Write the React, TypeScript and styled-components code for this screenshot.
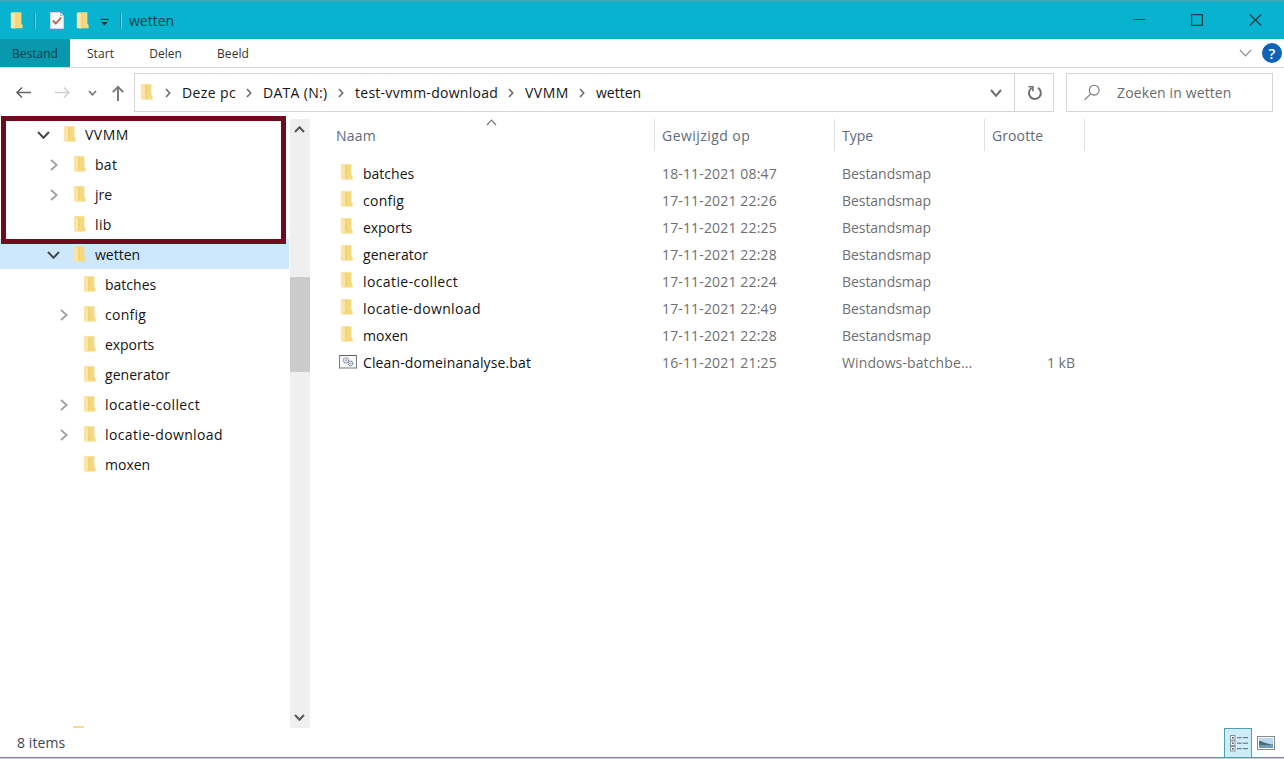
import React from "react";
import styled, { createGlobalStyle } from "styled-components";

const Global = createGlobalStyle`
  * { box-sizing: border-box; }
  html, body { margin: 0; padding: 0; background: #fff; overflow: hidden; }
  body { font-family: "Open Sans", "Noto Sans", sans-serif; font-size: 14px; color: #141414; }
`;

const Window = styled.div`
  display: flex;
  flex-direction: column;
  width: 1284px;
  height: 759px;
  background: #fff;
  border-bottom: 1px solid #b5d5da;
  white-space: nowrap;
`;

const Text = styled.span<{ $ls?: number }>`
  letter-spacing: ${(p) => p.$ls ?? 0}px;
`;

const TitleBar = styled.header`
  display: flex;
  align-items: center;
  height: 39px;
  flex: none;
  background: #07b3cf;
  border-top: 2px solid #3aa9bb;
  padding: 0 22px 0 10px;
  color: #15404d;
`;

const QuickTools = styled.div`
  display: flex;
  align-items: center;
  flex: 1;
`;

const ToolSlot = styled.span<{ $w: number }>`
  display: flex;
  align-items: center;
  width: ${(p) => p.$w}px;
`;

const Divider = styled.span<{ $gap: number }>`
  width: 2px;
  height: 16px;
  border-left: 1px solid #1594aa;
  background: #62d0e0;
  margin-right: ${(p) => p.$gap}px;
`;

const WindowButtons = styled.div`
  display: flex;
  align-items: center;
  gap: 46px;
  padding-bottom: 1px;
`;

const Ribbon = styled.nav`
  display: flex;
  height: 29px;
  flex: none;
  border-bottom: 1px solid #d6d6d9;
  font-size: 12px;
  color: #333;
`;

const FileTab = styled.div`
  display: flex;
  align-items: center;
  justify-content: center;
  width: 70px;
  background: #0899ae;
  color: #123c47;
`;

const RibbonTab = styled.div<{ $w: number }>`
  display: flex;
  align-items: center;
  justify-content: center;
  width: ${(p) => p.$w}px;
`;

const RibbonEnd = styled.div`
  display: flex;
  align-items: center;
  gap: 10px;
  margin-left: auto;
  padding-right: 2px;
`;

const Help = styled.span`
  display: flex;
  align-items: center;
  justify-content: center;
  width: 20px;
  height: 20px;
  border-radius: 50%;
  background: #0d63b5;
  color: #fff;
  font-size: 15px;
  font-weight: 600;
`;

const NavBar = styled.div`
  display: flex;
  height: 50px;
  flex: none;
  padding: 5px 11px 6px 0;
`;

const NavArrows = styled.div`
  display: flex;
  align-items: center;
  width: 134px;
  padding-left: 15px;
`;

const AddressBox = styled.div`
  display: flex;
  width: 920px;
  border: 1px solid #d5d5d8;
`;

const Crumbs = styled.div`
  display: flex;
  align-items: center;
  flex: 1;
  padding-left: 5px;
`;

const AddressIcon = styled.span`
  display: flex;
  width: 25px;
  padding-bottom: 2px;
`;

const Crumb = styled.div<{ $w: number }>`
  display: flex;
  align-items: center;
  width: ${(p) => p.$w}px;
`;

const CrumbArrow = styled.span`
  display: flex;
  width: 17px;
`;

const Drop = styled.span`
  display: flex;
  align-items: center;
  width: 24px;
`;

const Refresh = styled.span`
  display: flex;
  align-items: center;
  justify-content: center;
  width: 39px;
  padding-left: 2px;
  border-left: 1px solid #d5d5d8;
`;

const Search = styled.div`
  display: flex;
  align-items: center;
  gap: 16px;
  width: 207px;
  margin-left: 12px;
  padding-left: 17px;
  border: 1px solid #d5d5d8;
  color: #6b6b6c;
`;

const Body = styled.main`
  display: flex;
  height: 610px;
  flex: none;
`;

const Sidebar = styled.aside`
  position: relative;
  width: 290px;
  padding: 1px 1px 0 0;
  display: flex;
  flex-direction: column;
`;

const TreeRow = styled.div<{ $depth: number; $active?: boolean }>`
  display: flex;
  align-items: center;
  height: 30px;
  padding-left: ${(p) => 37 + p.$depth * 10}px;
  background: ${(p) => (p.$active ? "#cde7fc" : "transparent")};
`;

const Toggle = styled.span`
  display: flex;
  width: 26px;
  padding-top: 2px;
`;

const ClosedInset = styled.span`
  display: flex;
  padding-left: 3px;
`;

const FolderSlot = styled.span`
  display: flex;
  width: 22px;
  padding-bottom: 1px;
`;

const Highlight = styled.div`
  position: absolute;
  left: 1px;
  top: -2px;
  width: 285px;
  height: 128px;
  border: 5px solid #720a1e;
`;

const ClippedFolder = styled.span`
  height: 2px;
  width: 11px;
  margin: auto 0 0 73px;
  background: #f3dc92;
  border-radius: 1px 1px 0 0;
`;

const Scrollbar = styled.div`
  display: flex;
  flex-direction: column;
  align-items: center;
  width: 20px;
  margin-top: 1px;
  padding: 7px 0;
  background: #efeff0;
`;

const ScrollMark = styled.span`
  display: flex;
  padding-right: 1px;
`;

const Thumb = styled.div`
  width: 20px;
  height: 95px;
  margin: 144px 0 auto;
  background: #cbcbcb;
`;

const List = styled.section`
  flex: 1;
`;

const columns = "345px 180px 150px 100px";

const Head = styled.div`
  position: relative;
  display: grid;
  grid-template-columns: ${columns};
  height: 32px;
  margin-top: 1px;
  color: #5f6b7c;
`;

const HeadCell = styled.div<{ $pad: number }>`
  display: flex;
  align-items: center;
  padding-left: ${(p) => p.$pad}px;
  border-right: 1px solid #e0e1e3;
`;

const SortMark = styled.span`
  position: absolute;
  left: 176px;
  top: 0;
  display: flex;
`;

const Rows = styled.div`
  padding-top: 9px;
`;

const Row = styled.div`
  display: grid;
  grid-template-columns: ${columns};
  height: 27px;
  align-items: center;
  color: #6f6f70;
`;

const NameCell = styled.div`
  display: flex;
  align-items: center;
  padding-left: 29px;
  color: #141414;
`;

const IconSlot = styled.span`
  display: flex;
  width: 24px;
  padding-bottom: 3px;
`;

const FolderInset = styled.span`
  display: flex;
  padding-left: 1px;
`;

const Cell = styled.div<{ $end?: boolean }>`
  padding: 0 10px 0 7px;
  text-align: ${(p) => (p.$end ? "right" : "left")};
`;

const StatusBar = styled.footer`
  display: flex;
  align-items: center;
  height: 30px;
  padding: 0 8px 0 17px;
  border-bottom: 1px solid #529da8;
  color: #3b4656;
`;

const Views = styled.div`
  display: flex;
  align-items: center;
  align-self: stretch;
  gap: 5px;
  margin-left: auto;
`;

const ActiveView = styled.span`
  display: flex;
  align-items: center;
  justify-content: center;
  width: 28px;
  height: 29px;
  padding-left: 1px;
  background: #cdeef8;
  border: 1px solid #4d9fb3;
  border-bottom: 0;
`;

const Folder = ({ h = 16 }: { h?: number }) => (
  <svg width="13" height={h} viewBox="0 0 13 16" preserveAspectRatio="none">
    <path d="M1.5 0.3H11.4V10.8L12.6 12.2V15.4H1.5z" fill="#f5d980" />
    <path d="M5.2 1.8L6.6 0.9V13.4L5.2 15.4z" fill="#f0cd6d" />
    <path d="M0.8 0.6L5.2 1.8V15.8L0.8 14.8z" fill="#fae5a6" />
  </svg>
);

type ChevronProps = { dir: "up" | "down" | "right"; w?: number; color?: string; stroke?: number };
const Chevron = ({ dir, w = 11, color = "#4b4b4d", stroke = 1.8 }: ChevronProps) => {
  const h = Math.round(w * 0.64);
  const d =
    dir === "right"
      ? `M1 1L${h - 1.3} ${w / 2}L1 ${w - 1}`
      : dir === "down"
      ? `M1 1L${w / 2} ${h - 1.2}L${w - 1} 1`
      : `M1 ${h - 1}L${w / 2} 1.2L${w - 1} ${h - 1}`;
  return (
    <svg width={dir === "right" ? h : w} height={dir === "right" ? w : h} fill="none" stroke={color} strokeWidth={stroke}>
      <path d={d} />
    </svg>
  );
};

const Arrow = ({ kind, color }: { kind: "left" | "right" | "up"; color: string }) => (
  <svg width="17" height="17" viewBox="0 0 17 17" fill="none" stroke={color} strokeWidth="1.6">
    {kind === "left" && <path d="M16 8.5H2M7 3.5l-5 5 5 5" />}
    {kind === "right" && <path d="M1 8.5h14M10 3.5l5 5-5 5" />}
    {kind === "up" && <path d="M9 17V3M3.8 8.2L9 2.8l5.2 5.4" strokeWidth="1.9" />}
  </svg>
);

const BatchIcon = () => (
  <svg width="18" height="15" viewBox="0 0 18 15" fill="none">
    <rect x="0.5" y="1.5" width="17" height="12.5" fill="#fafafa" stroke="#77797d" />
    <path d="M1 1.5h16" stroke="#5f6166" />
    <circle cx="7" cy="6.3" r="2.6" stroke="#8590a2" strokeWidth="1.2" strokeDasharray="1.3 .4" />
    <circle cx="7" cy="6.3" r=".8" stroke="#8590a2" strokeWidth=".7" />
    <circle cx="11.4" cy="9.4" r="2.3" stroke="#8590a2" strokeWidth="1.2" strokeDasharray="1.3 .4" />
    <circle cx="11.4" cy="9.4" r=".7" stroke="#8590a2" strokeWidth=".7" />
  </svg>
);

type Node = { name: string; depth: number; state?: "open" | "closed"; active?: boolean; ls?: number };
const tree: Node[] = [
  { name: "VVMM", depth: 0, state: "open", ls: 0.5 },
  { name: "bat", depth: 1, state: "closed", ls: 0.3 },
  { name: "jre", depth: 1, state: "closed" },
  { name: "lib", depth: 1, ls: 0.4 },
  { name: "wetten", depth: 1, state: "open", active: true },
  { name: "batches", depth: 2 },
  { name: "config", depth: 2, state: "closed", ls: 0.25 },
  { name: "exports", depth: 2, ls: -0.05 },
  { name: "generator", depth: 2, ls: 0.05 },
  { name: "locatie-collect", depth: 2, state: "closed", ls: 0.4 },
  { name: "locatie-download", depth: 2, state: "closed", ls: 0.36 },
  { name: "moxen", depth: 2 },
];

type File = { name: string; date: string; type?: string; size?: string; ls?: number };
const files: File[] = [
  { name: "batches", date: "18-11-2021 08:47" },
  { name: "config", date: "17-11-2021 22:26", ls: 0.25 },
  { name: "exports", date: "17-11-2021 22:25", ls: -0.05 },
  { name: "generator", date: "17-11-2021 22:28", ls: 0.05 },
  { name: "locatie-collect", date: "17-11-2021 22:24", ls: 0.4 },
  { name: "locatie-download", date: "17-11-2021 22:49", ls: 0.36 },
  { name: "moxen", date: "17-11-2021 22:28" },
  { name: "Clean-domeinanalyse.bat", date: "16-11-2021 21:25", type: "Windows-batchbe...", size: "1 kB", ls: 0.12 },
];

const crumbs = [
  { name: "Deze pc", w: 81, ls: 0.4 },
  { name: "DATA (N:)", w: 92, ls: 0.3 },
  { name: "test-vvmm-download", w: 170, ls: 0.27 },
  { name: "VVMM", w: 71, ls: 0.5 },
  { name: "wetten", w: 80, ls: 0 },
];

export default function App() {
  return (
    <>
      <Global />
      <Window>
        <TitleBar>
          <QuickTools>
            <ToolSlot $w={24}><Folder h={17} /></ToolSlot>
            <Divider $gap={14} />
            <ToolSlot $w={26}>
              <svg width="14" height="17" viewBox="0 0 14 17" fill="none">
                <path d="M.5.5h10l3 3v13H.5z" fill="#f7fafa" stroke="#c9dade" />
                <path d="M10.5.5v3h3" stroke="#a9bdc2" />
                <path d="M2.8 8.5l3 3 5.4-6" stroke="#b85f45" strokeWidth="1.8" />
              </svg>
            </ToolSlot>
            <ToolSlot $w={24}><Folder h={17} /></ToolSlot>
            <ToolSlot $w={20}>
              <svg width="9" height="12" viewBox="0 0 9 12">
                <path d="M.5 4.5h8" stroke="#12343d" strokeWidth="1.2" />
                <path d="M.7 6.3h7.6L4.5 10.5z" fill="#12343d" />
                <path d="M1.5 6.3h6" stroke="#8fdce8" strokeWidth=".7" />
              </svg>
            </ToolSlot>
            <Divider $gap={7} />
            <Text>wetten</Text>
          </QuickTools>
          <WindowButtons>
            <svg width="12" height="12" stroke="#173c47"><path d="M0 5.5h12" /></svg>
            <svg width="12" height="12" fill="none" stroke="#173c47" strokeWidth="1.2"><rect x=".6" y=".6" width="10.8" height="10.8" /></svg>
            <svg width="13" height="12" fill="none" stroke="#173c47" strokeWidth="1.2"><path d="M.6.5l11.6 11M12.2.5L.6 11.5" /></svg>
          </WindowButtons>
        </TitleBar>

        <Ribbon>
          <FileTab><Text>Bestand</Text></FileTab>
          <RibbonTab $w={61}><Text $ls={0.1}>Start</Text></RibbonTab>
          <RibbonTab $w={69}>Delen</RibbonTab>
          <RibbonTab $w={66}><Text $ls={0.1}>Beeld</Text></RibbonTab>
          <RibbonEnd>
            <Chevron dir="down" w={13} color="#8f8f91" stroke={1.2} />
            <Help>?</Help>
          </RibbonEnd>
        </Ribbon>

        <NavBar>
          <NavArrows>
            <ToolSlot $w={39}><Arrow kind="left" color="#666668" /></ToolSlot>
            <ToolSlot $w={34}><Arrow kind="right" color="#d0d0d2" /></ToolSlot>
            <ToolSlot $w={21}><Chevron dir="down" w={9} color="#77777a" stroke={1.7} /></ToolSlot>
            <ToolSlot $w={17}><Arrow kind="up" color="#77777a" /></ToolSlot>
          </NavArrows>
          <AddressBox>
            <Crumbs>
              <AddressIcon><Folder /></AddressIcon>
              {crumbs.map((c) => (
                <Crumb key={c.name} $w={c.w}>
                  <CrumbArrow><Chevron dir="right" w={10} color="#6d6d70" stroke={1.6} /></CrumbArrow>
                  <Text $ls={c.ls}>{c.name}</Text>
                </Crumb>
              ))}
            </Crumbs>
            <Drop><Chevron dir="down" w={12} color="#6d6d70" stroke={2} /></Drop>
            <Refresh>
              <svg width="16" height="16" viewBox="0 0 16 16" fill="none" stroke="#717174" strokeWidth="2">
                <path d="M11 2.9A6 6 0 1 1 4.6 3" />
                <path d="M1.5 1.8h4.4V6.2" strokeWidth="1.6" />
              </svg>
            </Refresh>
          </AddressBox>
          <Search>
            <svg width="17" height="17" viewBox="0 0 17 17" fill="none" stroke="#747477" strokeWidth="1.1">
              <circle cx="10.2" cy="6.2" r="4.9" />
              <path d="M6.8 9.8L.6 15.8" />
            </svg>
            <Text $ls={0.12}>Zoeken in wetten</Text>
          </Search>
        </NavBar>

        <Body>
          <Sidebar>
            {tree.map((n) => (
              <TreeRow key={n.name} $depth={n.depth} $active={n.active}>
                <Toggle>
                  {n.state === "open" && <Chevron dir="down" w={13} color="#47494d" stroke={2} />}
                  {n.state === "closed" && (
                    <ClosedInset><Chevron dir="right" w={12} color="#a1a1a4" stroke={1.9} /></ClosedInset>
                  )}
                </Toggle>
                <FolderSlot><Folder /></FolderSlot>
                <Text $ls={n.ls}>{n.name}</Text>
              </TreeRow>
            ))}
            <ClippedFolder />
            <Highlight />
          </Sidebar>
          <Scrollbar>
            <ScrollMark><Chevron dir="up" color="#59595b" stroke={2} /></ScrollMark>
            <Thumb />
            <ScrollMark><Chevron dir="down" color="#59595b" stroke={2} /></ScrollMark>
          </Scrollbar>
          <List>
            <Head>
              <SortMark><Chevron dir="up" color="#77777a" stroke={1.2} /></SortMark>
              <HeadCell $pad={26}><Text $ls={0.2}>Naam</Text></HeadCell>
              <HeadCell $pad={7}><Text $ls={0.45}>Gewijzigd op</Text></HeadCell>
              <HeadCell $pad={7}><Text>Type</Text></HeadCell>
              <HeadCell $pad={7}><Text $ls={0.1}>Grootte</Text></HeadCell>
            </Head>
            <Rows>
              {files.map((f) => (
                <Row key={f.name}>
                  <NameCell>
                    <IconSlot>{f.type ? <BatchIcon /> : <FolderInset><Folder /></FolderInset>}</IconSlot>
                    <Text $ls={f.ls}>{f.name}</Text>
                  </NameCell>
                  <Cell><Text $ls={0.15}>{f.date}</Text></Cell>
                  <Cell><Text $ls={f.type ? 0.12 : -0.05}>{f.type ?? "Bestandsmap"}</Text></Cell>
                  <Cell $end>{f.size}</Cell>
                </Row>
              ))}
            </Rows>
          </List>
        </Body>

        <StatusBar>
          <Text $ls={0.08}>8 items</Text>
          <Views>
            <ActiveView>
              <svg width="18" height="17" viewBox="0 0 18 17" fill="none">
                {[0.5, 6, 11.5].map((y) => (
                  <g key={y}>
                    <rect x=".5" y={y} width="4.5" height="4.5" fill="#fff" stroke="#8d8f95" />
                    <rect x="2" y={y + 1.5} width="1.6" height="1.6" fill="#44546a" />
                    <path d={`M7 ${y + 2.2}h4.6M12.8 ${y + 2.2}H18`} stroke="#5b656c" />
                  </g>
                ))}
              </svg>
            </ActiveView>
            <svg width="19" height="14" viewBox="0 0 19 14">
              <rect x=".5" y=".5" width="17" height="13" fill="#fff" stroke="#85888d" />
              <rect x="2" y="2" width="14" height="10" fill="#b8d8ea" />
              <path d="M2 5c4 0 6 3 14 3.5V9H2z" fill="#466c78" />
              <path d="M2 9h14v3H2z" fill="#6d9bb5" />
            </svg>
          </Views>
        </StatusBar>
      </Window>
    </>
  );
}
